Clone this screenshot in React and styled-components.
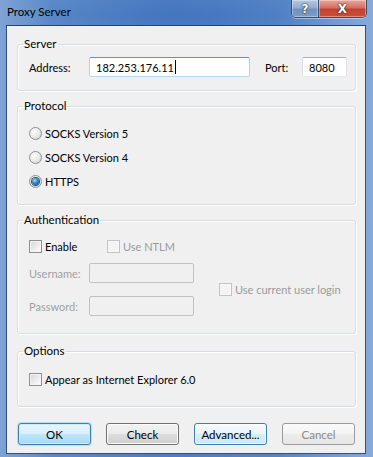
import React from 'react';
import styled, { createGlobalStyle, css } from 'styled-components';

const FONT = '"Lato", "Noto Sans", sans-serif';

const Global = createGlobalStyle`
  html, body { margin: 0; padding: 0; background: #fff; overflow: hidden; }
  body { font-family: ${FONT}; }
  * { box-sizing: border-box; }
`;

const Window = styled.div`
  position: relative;
  width: 373px;
  height: 457px;
  display: flex;
  flex-direction: column;
  overflow: hidden;
  background: linear-gradient(90deg, #7ea3d5 0%, #5b89c8 14%, #4d7ec3 45%, #5685c7 75%, #86aadb 100%);
  font-family: ${FONT};
  font-size: 11px;
  color: #000;
`;

const TitleBar = styled.div`
  height: 25px;
  flex: none;
  display: flex;
  align-items: flex-start;
  background: radial-gradient(ellipse 60% 120% at 50% 60%, rgba(60, 110, 185, 0.55), rgba(60, 110, 185, 0) 70%);
`;

const Title = styled.div`
  padding-left: 7px;
  line-height: 24px;
  font-size: 11.5px;
  color: #000;
`;

const Captions = styled.div`
  margin-left: auto;
  margin-right: 6px;
  display: flex;
  height: 18px;
  border: 1px solid #3b4e6c;
  border-top: none;
  border-radius: 0 0 5px 5px;
  overflow: hidden;
  box-shadow: 0 1px 0 rgba(255, 255, 255, 0.4);
`;

const CaptionButton = styled.div`
  width: ${p => p.$w}px;
  display: flex;
  align-items: center;
  justify-content: center;
  color: #fff;
  font-family: "DejaVu Sans", sans-serif;
  font-weight: bold;
  font-size: 12px;
  text-shadow: 0 0 2px #233, 0 0 1px #000;
  box-shadow: inset 0 0 0 1px rgba(255, 255, 255, 0.35);
  ${p => p.$close ? css`
    background: linear-gradient(180deg, #e8a89c 0%, #d47161 45%, #c3402f 55%, #c9503c 100%);
  ` : css`
    background: linear-gradient(180deg, #b6c8e2 0%, #93acd0 45%, #7391bd 55%, #7e9bc5 100%);
    border-right: 1px solid #3b4e6c;
  `}
`;

const Frame = styled.div`
  flex: 1;
  display: flex;
  padding: 0 7px 3px 6px;
  min-width: 0;
`;

const Client = styled.div`
  flex: 1;
  min-width: 0;
  display: flex;
  flex-direction: column;
  background: #f0f0f0;
  border: 1px solid #34507a;
  border-top-color: #2a4268;
  padding: 10px 9px 0 10px;
`;

const Groups = styled.div`
  display: flex;
  flex-direction: column;
  gap: 7px;
`;

const Group = styled.fieldset`
  margin: ${p => p.$mt || 0}px 0 0 0;
  min-width: 0;
  border: 1px solid #d5dfe5;
  border-radius: 3px;
  box-shadow: inset 1px 1px 0 #fff, 1px 1px 0 #fff;
  padding: ${p => p.$pt}px 10px ${p => p.$pb}px 11px;
`;

const Legend = styled.legend`
  margin-left: -6px;
  padding: 0 1px;
  line-height: 16px;
  font-size: 11.5px;
  color: #000;
`;

const Row = styled.div`
  display: flex;
  align-items: center;
  height: ${p => p.$h || 20}px;
`;

const Label = styled.span`
  width: ${p => p.$w}px;
  margin-left: ${p => p.$ml || 0}px;
  flex: none;
  color: ${p => (p.$disabled ? '#a0a0a0' : '#000')};
  white-space: nowrap;
`;

const TextBox = styled.div`
  width: ${p => p.$w}px;
  height: ${p => p.$h || 20}px;
  flex: none;
  display: flex;
  align-items: center;
  padding-left: 6px;
  background: ${p => (p.$disabled ? '#f0f0f0' : '#fff')};
  border: 1px solid;
  border-radius: 2px;
  ${p => p.$focus ? css`
    border-color: #5c93bc #b5cfe7 #b7d9ed #b5cfe7;
  ` : p.$disabled ? css`
    border-color: #c2c2c2;
  ` : css`
    border-color: #abadb3 #e2e3ea #e3e9ef #dbdfe6;
  `}
  color: #000;
  font-size: 11px;
`;

const Caret = styled.span`
  display: inline-block;
  width: 1px;
  height: 14px;
  background: #000;
  margin-left: 1px;
`;

const Radio = styled.span`
  position: relative;
  width: 13px;
  height: 13px;
  flex: none;
  border-radius: 50%;
  border: 1px solid #8e8f8f;
  background: radial-gradient(circle at 35% 30%, #ffffff 0%, #ececec 45%, #cfcfcf 100%);
  ${p => p.$checked && css`
    &::after {
      content: '';
      position: absolute;
      left: 2px;
      top: 2px;
      width: 7px;
      height: 7px;
      border-radius: 50%;
      background: radial-gradient(circle at 40% 35%, #a6dcf7 0%, #2f86cf 45%, #0c3d73 100%);
      box-shadow: 0 0 0 1px #274a75;
    }
  `}
`;

const Check = styled.span`
  width: 13px;
  height: 13px;
  flex: none;
  border: 1px solid ${p => (p.$disabled ? '#c3c3c3' : '#8e8f8f')};
  background: ${p => (p.$disabled
    ? '#f4f4f4'
    : 'linear-gradient(135deg, #d4d4d4 0%, #eeeeee 60%, #fdfdfd 100%)')};
  box-shadow: inset 0 0 0 1px ${p => (p.$disabled ? '#f7f7f7' : '#f4f4f4')};
`;

const Option = styled.label`
  display: flex;
  align-items: center;
  gap: ${p => p.$gap || 3}px;
  width: ${p => (p.$w ? `${p.$w}px` : 'auto')};
  flex: none;
  color: ${p => (p.$disabled ? '#9a9a9a' : '#000')};
  white-space: nowrap;
`;

const AuthBody = styled.div`
  display: flex;
  align-items: center;
  margin-top: 7px;
`;

const Fields = styled.div`
  display: flex;
  flex-direction: column;
  gap: 13px;
  margin-right: 25px;
`;

const Buttons = styled.div`
  display: flex;
  justify-content: space-between;
  margin-top: 16px;
  padding: 0 1px;
`;

const Button = styled.div`
  width: 73px;
  height: 22px;
  display: flex;
  align-items: center;
  justify-content: center;
  border-radius: 3px;
  font-size: 11.5px;
  color: ${p => (p.$faded ? '#8a8a8a' : '#000')};
  ${p => p.$kind === 'default' ? css`
    border: 1px solid #3c7fb1;
    background: linear-gradient(180deg, #eaf6fd 0%, #d9f0fc 48%, #bee6fd 52%, #a7d9f5 100%);
    box-shadow: inset 0 0 0 1px #c8ecfc, 0 0 0 1px rgba(84, 194, 240, 0.35);
  ` : p.$kind === 'hover' ? css`
    border: 1px solid #3c7fb1;
    background: linear-gradient(180deg, #f6fbfe 0%, #e8f4fb 48%, #d7edf9 52%, #cde7f6 100%);
    box-shadow: inset 0 0 0 1px #fbfdff;
  ` : p.$faded ? css`
    border: 1px solid #9a9a9a;
    background: linear-gradient(180deg, #fafafa 0%, #f4f4f4 48%, #ececec 52%, #e6e6e6 100%);
  ` : css`
    border: 1px solid #707070;
    background: linear-gradient(180deg, #f2f2f2 0%, #ebebeb 48%, #dddddd 52%, #cfcfcf 100%);
    box-shadow: inset 0 0 0 1px #fcfcfc;
  `}
`;

export default function App() {
  return (
    <Window>
      <Global />
      <TitleBar>
        <Title>Proxy Server</Title>
        <Captions>
          <CaptionButton $w={27}>?</CaptionButton>
          <CaptionButton $w={47} $close>X</CaptionButton>
        </Captions>
      </TitleBar>
      <Frame>
        <Client>
          <Groups>
            <Group $pt={5} $pb={13}>
              <Legend>Server</Legend>
              <Row>
                <Label $w={60}>Address:</Label>
                <TextBox $w={161} $focus>182.253.176.11<Caret /></TextBox>
                <Label $w={37} $ml={15}>Port:</Label>
                <TextBox $w={45}>8080</TextBox>
              </Row>
            </Group>

            <Group $pt={7} $pb={11}>
              <Legend>Protocol</Legend>
              <Row $h={24}><Option><Radio />SOCKS Version 5</Option></Row>
              <Row $h={24}><Option><Radio />SOCKS Version 4</Option></Row>
              <Row $h={24}><Option><Radio $checked />HTTPS</Option></Row>
            </Group>

            <Group $pt={8} $pb={17}>
              <Legend>Authentication</Legend>
              <Row>
                <Option $w={78}><Check />Enable</Option>
                <Option $disabled><Check $disabled />Use NTLM</Option>
              </Row>
              <AuthBody>
                <Fields>
                  <Row>
                    <Label $w={60} $disabled>Username:</Label>
                    <TextBox $w={105} $disabled />
                  </Row>
                  <Row>
                    <Label $w={60} $disabled>Password:</Label>
                    <TextBox $w={105} $disabled />
                  </Row>
                </Fields>
                <Option $disabled><Check $disabled />Use current user login</Option>
              </AuthBody>
            </Group>

            <Group $mt={2} $pt={10} $pb={17}>
              <Legend>Options</Legend>
              <Row><Option><Check />Appear as Internet Explorer 6.0</Option></Row>
            </Group>
          </Groups>

          <Buttons>
            <Button $kind="default">OK</Button>
            <Button>Check</Button>
            <Button $kind="hover">Advanced...</Button>
            <Button $faded>Cancel</Button>
          </Buttons>
        </Client>
      </Frame>
    </Window>
  );
}
